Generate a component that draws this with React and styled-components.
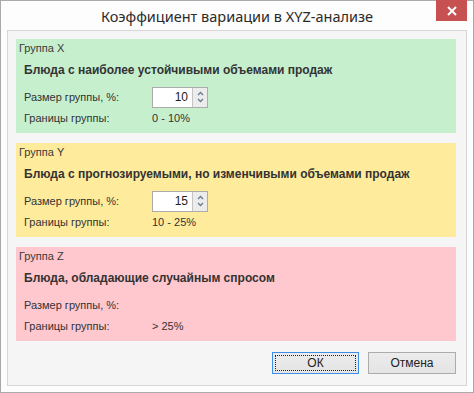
import React from "react";
import styled, { createGlobalStyle } from "styled-components";

const Global = createGlobalStyle`
  html, body {
    margin: 0;
    padding: 0;
    background: #ffffff;
  }
  * {
    box-sizing: border-box;
  }
`;

const Window = styled.div`
  width: 474px;
  height: 393px;
  border: 1px solid #a9a9a9;
  background: #fdfdfd;
  display: flex;
  flex-direction: column;
  padding: 0 6px 6px 6px;
`;

const TitleBar = styled.div`
  height: 29px;
  display: flex;
  align-items: center;
  justify-content: center;
  position: relative;
  font-family: "Noto Sans", "Open Sans", sans-serif;
  font-size: 14.5px;
  color: #2b2b2b;
`;

const CloseButton = styled.div`
  position: absolute;
  top: -1px;
  right: 0;
  width: 31px;
  height: 21px;
  background: #c75050;
  display: flex;
  align-items: center;
  justify-content: center;
`;

const Client = styled.div`
  flex: 1;
  border: 1px solid #d6d6d6;
  background: #f5f5f5;
  padding: 8px 10px 0 8px;
  display: flex;
  flex-direction: column;
  gap: 10px;
  font-family: "Liberation Sans", Arial, sans-serif;
  font-size: 11px;
  color: #333333;
`;

const Panel = styled.div`
  background: ${(p) => p.$bg};
  height: 94px;
  display: flex;
  flex-direction: column;
`;

const GroupTitle = styled.div`
  height: 18px;
  line-height: 18px;
  padding-left: 3px;
  color: #3a3a3a;
`;

const Heading = styled.div`
  height: 26px;
  line-height: 26px;
  padding-left: 8px;
  font-weight: bold;
  font-size: 12px;
  color: #333333;
`;

const Row = styled.div`
  height: ${(p) => p.$h}px;
  display: grid;
  grid-template-columns: 128px 1fr;
  align-items: center;
  padding-left: 8px;
`;

const Spin = styled.div`
  width: 56px;
  height: 21px;
  border: 1px solid #ababab;
  display: flex;
  background: #ffffff;
`;

const SpinValue = styled.div`
  width: 39px;
  text-align: right;
  padding-right: 4px;
  line-height: 19px;
  font-size: 12px;
  color: #222222;
`;

const SpinButtons = styled.div`
  flex: 1;
  border-left: 1px solid #c4c4c4;
  background: #ececec;
  display: flex;
  flex-direction: column;
  align-items: center;
  justify-content: center;
  gap: 2px;
`;

const Footer = styled.div`
  display: flex;
  justify-content: flex-end;
  gap: 9px;
  margin-top: 0;
  padding-top: 1px;
`;

const Button = styled.div`
  width: ${(p) => p.$w}px;
  height: 22px;
  border: 1px solid ${(p) => (p.$focus ? "#3c8ee6" : "#acacac")};
  background: linear-gradient(#ececec, #e4e4e4);
  display: flex;
  align-items: center;
  justify-content: center;
  font-size: 12px;
  color: #222222;
  position: relative;
`;

const FocusRing = styled.div`
  position: absolute;
  inset: 2px;
  border: 1px dotted #222222;
`;

const Chevron = ({ up }) => (
  <svg width="7" height="5" viewBox="0 0 7 5">
    <path
      d={up ? "M1 4 L3.5 1.5 L6 4" : "M1 1 L3.5 3.5 L6 1"}
      fill="none"
      stroke="#6a7a8a"
      strokeWidth="1.3"
    />
  </svg>
);

const SpinBox = ({ value }) => (
  <Spin>
    <SpinValue>{value}</SpinValue>
    <SpinButtons>
      <Chevron up />
      <Chevron />
    </SpinButtons>
  </Spin>
);

const groups = [
  {
    title: "Группа X",
    heading: "Блюда с наиболее устойчивыми объемами продаж",
    size: "10",
    bounds: "0 - 10%",
    bg: "#c6efce",
  },
  {
    title: "Группа Y",
    heading: "Блюда с прогнозируемыми, но изменчивыми объемами продаж",
    size: "15",
    bounds: "10 - 25%",
    bg: "#ffeb9c",
  },
  {
    title: "Группа Z",
    heading: "Блюда, обладающие случайным спросом",
    size: null,
    bounds: "> 25%",
    bg: "#ffc7ce",
  },
];

export default function App() {
  return (
    <>
      <Global />
      <Window>
        <TitleBar>
          Коэффициент вариации в XYZ-анализе
          <CloseButton>
            <svg width="10" height="10" viewBox="0 0 10 10">
              <path d="M1 1 L9 9 M9 1 L1 9" stroke="#ffffff" strokeWidth="2" />
            </svg>
          </CloseButton>
        </TitleBar>
        <Client>
          {groups.map((g) => (
            <Panel key={g.title} $bg={g.bg}>
              <GroupTitle>{g.title}</GroupTitle>
              <Heading>{g.heading}</Heading>
              <Row $h={28}>
                <span>Размер группы, %:</span>
                {g.size && <SpinBox value={g.size} />}
              </Row>
              <Row $h={14}>
                <span>Границы группы:</span>
                <span>{g.bounds}</span>
              </Row>
            </Panel>
          ))}
          <Footer>
            <Button $w={87} $focus>
              <FocusRing />
              ОК
            </Button>
            <Button $w={88}>Отмена</Button>
          </Footer>
        </Client>
      </Window>
    </>
  );
}
